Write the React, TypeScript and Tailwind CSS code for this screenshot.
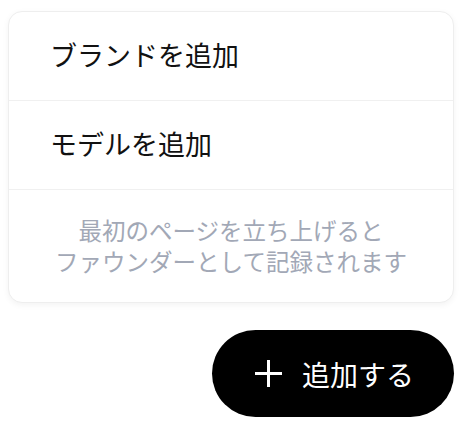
import React from 'react';

const font = { fontFamily: '"Noto Sans CJK JP", "Noto Sans", sans-serif' };

const items = ['ブランドを追加', 'モデルを追加'];

function PlusIcon() {
  return (
    <svg width="27" height="27" viewBox="0 0 27 27" fill="none" stroke="currentColor" strokeWidth="3">
      <path d="M13.5 0v27M0 13.5h27" />
    </svg>
  );
}

export default function App() {
  return (
    <div className="w-[462px] h-[430px] bg-white pt-[11px] px-[8px]" style={font}>
      <div className="rounded-[14px] border border-[#eeeeee] bg-white shadow-[0_2px_6px_rgba(0,0,0,0.05)] overflow-hidden">
        {items.map((label) => (
          <div
            key={label}
            className="h-[89px] flex items-center pl-[41px] pb-[4px] border-b border-[#f0f0f0] text-[27px] leading-none text-[#111111]"
          >
            {label}
          </div>
        ))}
        <div className="py-[25px] text-center text-[23.5px] leading-[31px] text-[#a2a8b6]">
          <p>最初のページを立ち上げると</p>
          <p>ファウンダーとして記録されます</p>
        </div>
      </div>

      <div className="flex justify-end mt-[27px]">
        <button className="h-[87px] w-[242px] rounded-full bg-black text-white flex items-center pl-[43px] gap-[20px]">
          <PlusIcon />
          <span className="text-[28px] leading-none">追加する</span>
        </button>
      </div>
    </div>
  );
}
